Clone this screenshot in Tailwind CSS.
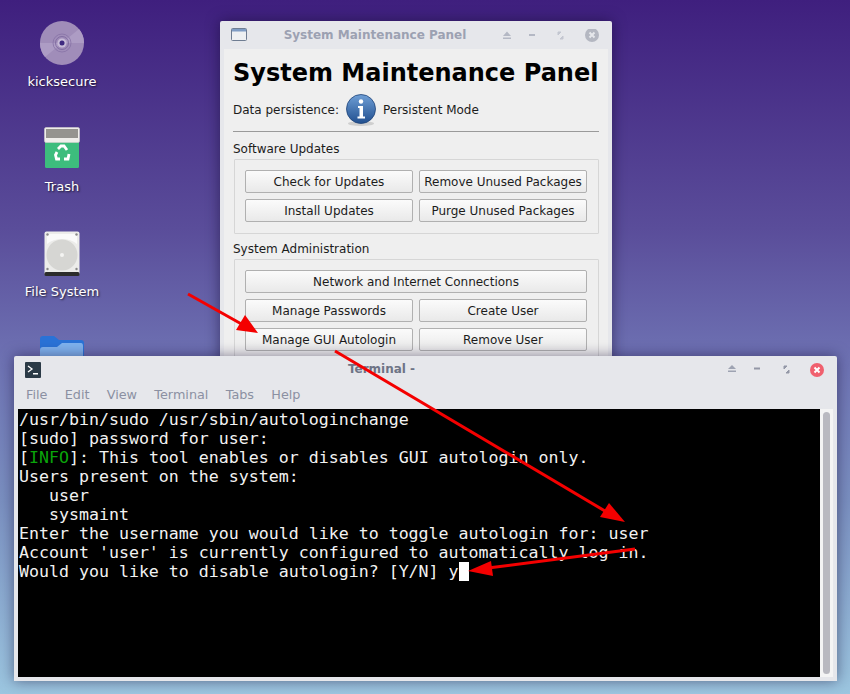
<!DOCTYPE html>
<html lang="en">
<head>
  <meta charset="UTF-8">
  <title>System Maintenance Panel</title>
  <script src="https://cdn.jsdelivr.net/npm/@tailwindcss/browser@4"></script>
</head>
<body class="m-0">
  <div class="relative w-[850px] h-[694px] overflow-hidden font-['DejaVu_Sans',sans-serif] bg-[linear-gradient(180deg,#3f1f7e_0%,#5a4d9a_33%,#6e72b3_52%,#7a8fc0_72%,#9cc6e0_100%)]">

    <!-- desktop icons -->
    <div class="absolute left-[12px] top-[20px] w-[100px] flex flex-col items-center text-[13px] text-white [text-shadow:1px_1px_2px_rgba(0,0,0,0.7)]">
      <div class="h-[46px] w-[46px]">
        <svg width="46" height="46" viewBox="0 0 46 46">
          <circle cx="23" cy="23" r="22" fill="#a08db9"/>
          <path d="M23 23 L40 9 A22 22 0 0 1 45 23 Z" fill="#ad9cc4"/>
          <path d="M23 23 L6 37 A22 22 0 0 1 1 23 Z" fill="#ad9cc4"/>
          <circle cx="23" cy="23" r="9" fill="none" stroke="#8672a6" stroke-width="0.8"/>
          <circle cx="23" cy="23" r="6.5" fill="none" stroke="#7a649c" stroke-width="0.8"/>
          <circle cx="23" cy="23" r="4.5" fill="#c8bcd8"/>
          <circle cx="23" cy="23" r="2.5" fill="#3f2a80"/>
        </svg>
      </div>
      <div class="mt-[6px] leading-[20px]">kicksecure</div>

      <div class="mt-[35px] h-[41px] w-[36px]">
        <svg width="36" height="41" viewBox="0 0 36 41">
          <rect x="1" y="14" width="34" height="27" rx="1.5" fill="#3dbd7d"/>
          <rect x="0.5" y="0.5" width="35" height="15" rx="1.5" fill="#efeeea" stroke="#d0d0cc" stroke-width="0.6"/>
          <rect x="2" y="2" width="32" height="9" fill="#95948f"/>
          <g fill="none" stroke="#fff" stroke-width="2.8">
            <path d="M14 22 L17 19 H20 L23 23"/>
            <path d="M25 27 L24 32 H20"/>
            <path d="M16 32 H12.5 L11.5 28 L13 25"/>
          </g>
        </svg>
      </div>
      <div class="mt-[9px] leading-[20px]">Trash</div>

      <div class="mt-[34px] h-[45px] w-[36px]">
        <svg width="36" height="45" viewBox="0 0 36 45">
          <rect x="0.5" y="0.5" width="35" height="44" rx="2" fill="#ececea"/>
          <rect x="0.5" y="41" width="35" height="4" rx="1.5" fill="#2c2c2c"/>
          <circle cx="18" cy="24" r="15.5" fill="#d6d6d3"/>
          <path d="M3 5 Q3 3 6 3 H30 Q33 3 33 5 V13 Q27 8 18 8 Q9 8 3 13 Z" fill="#fafafa"/>
          <circle cx="18" cy="24" r="2" fill="#f4f4f2"/>
          <circle cx="3.5" cy="3.5" r="1.2" fill="#888"/><circle cx="32.5" cy="3.5" r="1.2" fill="#888"/>
          <circle cx="3.5" cy="38" r="1.2" fill="#888"/><circle cx="32.5" cy="38" r="1.2" fill="#888"/>
        </svg>
      </div>
      <div class="mt-[6px] leading-[20px]">File System</div>

      <div class="mt-[33px] h-[46px] w-[44px]">
        <svg width="44" height="46" viewBox="0 0 44 46">
          <path d="M0 4 Q0 1 3 1 H14 L19 5 H41 Q44 5 44 8 V40 H0 Z" fill="#2a72d6"/>
          <path d="M0 15 Q0 12 3 12 H17 L22 8 H41 Q43 8 43 11 V40 H0 Z" fill="#7fb2ee"/>
        </svg>
      </div>
    </div>

    <!-- maintenance panel window -->
    <div class="absolute left-[220px] top-[21px] w-[392px] h-[345px] flex flex-col bg-[#e6e7eb] rounded-t-[2px] px-[4px] shadow-[0_0_14px_rgba(20,10,50,0.55)]">
      <div class="h-[28px] shrink-0 flex items-center relative -mx-[4px]">
        <svg class="absolute left-[11px] top-[7px]" width="16" height="13" viewBox="0 0 16 13">
          <rect x="0.5" y="0.5" width="15" height="12" rx="1" fill="#eef0f2" stroke="#6f7d92"/>
          <rect x="1" y="1" width="14" height="2.5" fill="#7f9cc4"/>
        </svg>
        <div class="w-[310px] text-center text-[12px] font-bold text-[#9ca1b2]">System Maintenance Panel</div>
        <svg class="absolute left-[282px] top-[8px]" width="100" height="14" viewBox="0 0 100 14">
          <path d="M1 7 L5 2.5 L9 7 Z M1 8.5 H9 V10 H1 Z" fill="#b4b8c4"/>
          <rect x="27" y="5" width="6" height="2" fill="#b4b8c4"/>
          <path d="M56 6 L59 3 H56 Z M58 10 L61 7 V10 Z" fill="#c3c6d0" stroke="#c3c6d0"/>
          <circle cx="90" cy="6" r="7" fill="#b4b7c1"/>
          <path d="M87.5 3.5 L92.5 8.5 M92.5 3.5 L87.5 8.5" stroke="#e6e7eb" stroke-width="2"/>
        </svg>
      </div>

      <div class="flex-1 bg-[#efefef] px-[9px] text-[12px] text-[#1c1c1c]">
        <h1 class="text-[24px] font-bold text-black leading-[30px] mt-[9px] whitespace-nowrap">System Maintenance Panel</h1>
        <div class="flex items-center h-[36px] mt-[4px] text-[12px]">
          <span>Data persistence:</span>
          <svg class="ml-[6px]" width="32" height="34" viewBox="0 0 32 34">
            <defs>
              <linearGradient id="info" x1="0" y1="0" x2="0" y2="1">
                <stop offset="0" stop-color="#6f9fd6"/><stop offset="1" stop-color="#214f8f"/>
              </linearGradient>
            </defs>
            <ellipse cx="16" cy="30.5" rx="13" ry="2.5" fill="#cfcfcf"/>
            <circle cx="16" cy="16" r="14.5" fill="url(#info)" stroke="#1f4478" stroke-width="0.8"/>
            <circle cx="16" cy="8.5" r="2.2" fill="#fff"/>
            <path d="M13 13 H18 V23.5 H20 V25.5 H12.5 V23.5 H14.5 V15 H13 Z" fill="#fff"/>
          </svg>
          <span class="ml-[6px]">Persistent Mode</span>
        </div>
        <div class="h-px bg-[#9a9a9a] mt-[3px]"></div>

        <div class="text-[12px] leading-[16px] mt-[9px]">Software Updates</div>
        <div class="grid grid-cols-2 gap-x-[6px] gap-y-[6px] ml-px border border-[#d6d6d6] rounded-[1px] pl-[10px] pr-[11px] pt-[10px] pb-[11px] mt-[2px]">
          <button class="h-[23px] text-[12px] whitespace-nowrap border border-[#b0b0b0] rounded-[2px] bg-[linear-gradient(180deg,#fbfbfb,#e9e9e9)]">Check for Updates</button>
          <button class="h-[23px] text-[12px] whitespace-nowrap border border-[#b0b0b0] rounded-[2px] bg-[linear-gradient(180deg,#fbfbfb,#e9e9e9)]">Remove Unused Packages</button>
          <button class="h-[23px] text-[12px] whitespace-nowrap border border-[#b0b0b0] rounded-[2px] bg-[linear-gradient(180deg,#fbfbfb,#e9e9e9)]">Install Updates</button>
          <button class="h-[23px] text-[12px] whitespace-nowrap border border-[#b0b0b0] rounded-[2px] bg-[linear-gradient(180deg,#fbfbfb,#e9e9e9)]">Purge Unused Packages</button>
        </div>

        <div class="text-[12px] leading-[16px] mt-[7px]">System Administration</div>
        <div class="grid grid-cols-2 gap-x-[6px] gap-y-[6px] ml-px border border-[#d6d6d6] rounded-[1px] pl-[10px] pr-[11px] pt-[10px] pb-[11px] mt-[2px]">
          <button class="col-span-2 h-[23px] text-[12px] whitespace-nowrap border border-[#b0b0b0] rounded-[2px] bg-[linear-gradient(180deg,#fbfbfb,#e9e9e9)]">Network and Internet Connections</button>
          <button class="h-[23px] text-[12px] whitespace-nowrap border border-[#b0b0b0] rounded-[2px] bg-[linear-gradient(180deg,#fbfbfb,#e9e9e9)]">Manage Passwords</button>
          <button class="h-[23px] text-[12px] whitespace-nowrap border border-[#b0b0b0] rounded-[2px] bg-[linear-gradient(180deg,#fbfbfb,#e9e9e9)]">Create User</button>
          <button class="h-[23px] text-[12px] whitespace-nowrap border border-[#b0b0b0] rounded-[2px] bg-[linear-gradient(180deg,#fbfbfb,#e9e9e9)]">Manage GUI Autologin</button>
          <button class="h-[23px] text-[12px] whitespace-nowrap border border-[#b0b0b0] rounded-[2px] bg-[linear-gradient(180deg,#fbfbfb,#e9e9e9)]">Remove User</button>
        </div>
      </div>
    </div>

    <!-- terminal window -->
    <div class="absolute left-[14px] top-[356px] w-[823px] h-[325px] flex flex-col bg-[#e6e7eb] px-[4px] pb-[4px] rounded-t-[2px] shadow-[0_0_14px_rgba(20,10,50,0.5)]">
      <div class="h-[25px] shrink-0 relative -mx-[4px] flex items-center">
        <svg class="absolute left-[11px] top-[6px]" width="16" height="16" viewBox="0 0 16 16">
          <rect width="16" height="16" rx="1" fill="#2b3a46"/>
          <path d="M3 4 L7 7 L3 10" fill="none" stroke="#fff" stroke-width="1.3"/>
          <rect x="8" y="11" width="5" height="1.5" fill="#fff"/>
        </svg>
        <div class="w-full text-center text-[12px] font-bold text-[#6e7486] pr-[88px]">Terminal -</div>
        <svg class="absolute left-[712px] top-[7px]" width="100" height="14" viewBox="0 0 100 14">
          <path d="M2 6 L6 2 L10 6 Z M2 7.5 H10 V9 H2 Z" fill="#9ea3b2"/>
          <rect x="28" y="4.5" width="6" height="2" fill="#9397a6"/>
          <path d="M58 6 L61 3 H58 Z M60 10 L63 7 V10 Z" fill="#9397a6" stroke="#9397a6"/>
          <circle cx="91" cy="7" r="7" fill="#f0606e"/>
          <path d="M88.5 4.5 L93.5 9.5 M93.5 4.5 L88.5 9.5" stroke="#fff" stroke-width="2"/>
        </svg>
      </div>
      <div class="h-[28px] shrink-0 flex items-center gap-[17.25px] pl-[8px] text-[12.8px] text-[#8b90a2]">
        <span>File</span><span>Edit</span><span>View</span><span>Terminal</span><span>Tabs</span><span>Help</span>
      </div>
      <div class="flex-1 flex min-h-0">
        <pre class="flex-1 bg-black text-[#f2f2f2] font-['DejaVu_Sans_Mono',monospace] text-[16.6px] leading-[19px] pt-[1px] pl-px m-0">/usr/bin/sudo /usr/sbin/autologinchange
[sudo] password for user:
[<span class="text-[#0aa50a]">INFO</span>]: This tool enables or disables GUI autologin only.
Users present on the system:
   user
   sysmaint
Enter the username you would like to toggle autologin for: user
Account 'user' is currently configured to automatically log in.
Would you like to disable autologin? [Y/N] y<span class="inline-block w-[10px] h-[19px] bg-white align-top"></span></pre>
        <div class="w-[13px] bg-[#f4f4f4] px-[3px] py-[3px]">
          <div class="h-full rounded-[4px] bg-[#b9b9c0]"></div>
        </div>
      </div>
    </div>

    <!-- annotation arrows -->
    <svg class="absolute left-0 top-0" width="850" height="694" viewBox="0 0 850 694">
      <g stroke="#f40000" stroke-width="3" fill="none">
        <path d="M188 294 L245 326"/>
        <path d="M335 351 L610 514"/>
        <path d="M635 549 L488 568"/>
      </g>
      <path d="M258 333 L236 330 L245 315 Z" fill="#f40000"/>
      <path d="M625 522 L600 517 L609 503 Z" fill="#f40000"/>
      <path d="M468 571 L491 561 L493 576 Z" fill="#f40000"/>
    </svg>
  </div>
</body>
</html>
